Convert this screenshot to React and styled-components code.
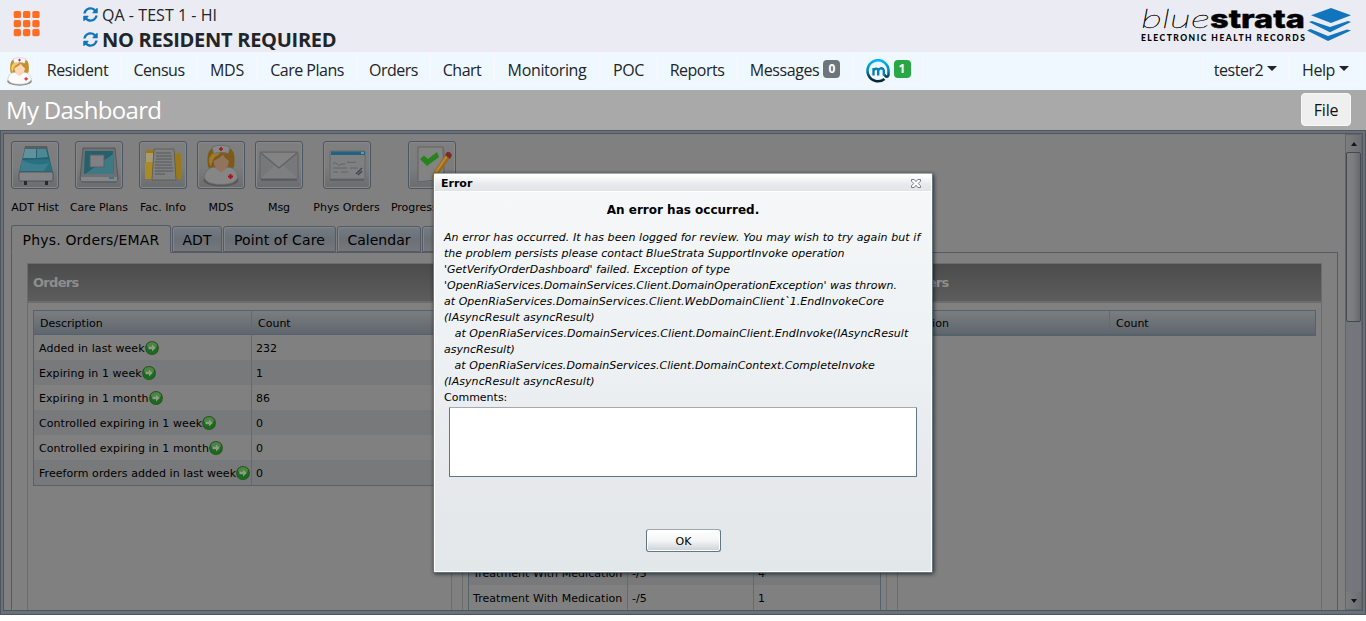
import React from "react";
import styled, { createGlobalStyle } from "styled-components";
import { FaSyncAlt } from "react-icons/fa";

const Global = createGlobalStyle`
  * { box-sizing: border-box; }
  html, body { margin: 0; background: #fff; overflow: hidden; }
`;

const ui = `"Open Sans", "Noto Sans", sans-serif`;
const vd = `"DejaVu Sans", sans-serif`;

const Page = styled.div`
  width: 1366px; height: 621px; display: flex; flex-direction: column;
  font-family: ${ui}; font-size: 16px; color: #212529; overflow: hidden;
`;
const T = styled.span`
  white-space: pre; letter-spacing: ${(p) => p.$ls || 0}px;
`;

const TopBar = styled.header`
  height: 52px; background: #ebebf3; display: flex; padding-left: 13px;
`;
const GridIcon = styled.svg`margin-top: 10px; width: 28px; height: 28px;`;
const Facility = styled.div`
  margin-left: 42px; flex: 1; display: flex; flex-direction: column; padding-top: 2px;
`;
const FacilityLine = styled.div`
  display: flex; align-items: center; gap: 4px; height: ${(p) => p.$h}px;
  font-size: ${(p) => p.$size}px; font-weight: ${(p) => (p.$bold ? 700 : 400)};
  svg { color: #0f75bc; width: 15px; height: 15px; flex: none; }
`;
const Logo = styled.svg`width: 226px; height: 52px;`;

const Nav = styled.nav`
  height: 38px; background: #f0f8ff; display: flex; align-items: flex-start; padding: 1px 4px 0 5px;
`;
const Nurse = styled.svg`width: 25px; height: 29px; margin: 4px 2px 0;`;
const NavItem = styled.div`
  width: ${(p) => p.$w}px; height: 32px; flex: none; border: 1px solid #f5f9fd; border-radius: 4px;
  display: flex; justify-content: center; align-items: center; gap: 4px; padding-top: 1px;
`;
const NavSpace = styled.div`flex: 1;`;
const Badge = styled.span`
  width: 17px; height: 18px; border-radius: 4px; background: ${(p) => p.$bg}; color: #fff; margin-bottom: 1px;
  font-size: 12px; font-weight: 700; line-height: 18px; text-align: center;
`;
const Caret = styled.span`
  border: 5px solid transparent; border-top-color: #212529; border-bottom: 0; margin-bottom: 2px;
`;
const MLogo = styled.svg`width: 24px; height: 24px; margin-top: 2px; flex: none;`;
const TitleBar = styled.div`
  height: 40px; background: #a9a9a9; display: flex; align-items: center; justify-content: space-between;
  padding: 0 15px 1px 6px; color: #fff; font-size: 24px;
`;
const FileButton = styled.button`
  width: 50px; height: 33px; border: 1px solid #f8f8f8; border-radius: 4px; background: #efefef;
  font: 16px ${ui}; color: #111; padding: 1px 0 0; letter-spacing: -0.2px;
`;

const Frame = styled.main`
  height: 485px; border: 1px solid #50555e; background: #687079; padding: 2px 2px 3px 2px; display: flex;
  font-family: ${vd}; font-size: 11px; color: #000;
`;
const Inner = styled.div`
  flex: 1; border: 1px solid #50555e; background: #808080; display: flex; overflow: hidden;
`;
const Content = styled.div`
  width: 1334px; padding: 7px 0 0 7px; display: flex; flex-direction: column; flex: none; overflow: hidden;
`;
const Tools = styled.div`display: flex; gap: 10px; height: 84px; flex: none;`;
const Tool = styled.div`
  width: ${(p) => p.$w}px; flex: none; display: flex; flex-direction: column; align-items: center;
`;
const ToolButton = styled.div`
  width: 48px; height: 48px; border: 1px solid #4a5661; border-radius: 3px;
  box-shadow: inset 0 0 0 1px #888;
  background: linear-gradient(#7f7f7f, #7b7c7d 55%, #6b6c6e);
  svg { display: block; width: 46px; height: 46px; }
`;
const ToolLabel = styled.div`height: 14px; line-height: 14px; margin-top: 12px; display: flex; justify-content: center;`;

const Tabs = styled.div`display: flex; height: 27px; align-items: flex-end; font-size: 14px; flex: none;`;
const Tab = styled.div`
  width: ${(p) => p.$w}px; height: ${(p) => (p.$on ? 28 : 26)}px; margin-bottom: ${(p) => (p.$on ? -1 : 0)}px;
  margin-right: 1px; position: relative;
  border: 1px solid #545b66; border-bottom-color: ${(p) => (p.$on ? "#808080" : "#545b66")};
  border-radius: 3px 3px 0 0; padding-top: ${(p) => (p.$on ? 2 : 1)}px;
  background: ${(p) => (p.$on ? "#808080" : "linear-gradient(#757b82, #6b7178 50%, #757779)")};
  box-shadow: ${(p) => (p.$on ? "none" : "inset 1px 1px 0 #838689")};
  display: flex; align-items: center; justify-content: center;
`;
const TabBody = styled.section`
  width: 1327px; flex: 1; border: 1px solid #545b66; border-bottom: 0; padding: 10px 15px 0;
  display: flex; gap: 10px; overflow: hidden;
`;
const Group = styled.div`
  width: 425px; flex: none; height: 400px; border: 1px solid #6a6c6f;
`;
const GroupHead = styled.h2`
  margin: 0; height: 39px; padding: 0 5px; display: flex; align-items: center;
  background: linear-gradient(#4b4b4b, #5d5d5d); border-bottom: 2px solid #6c6c6c;
  font-size: 13px; font-weight: 700; color: #8e8e8e;
`;
const Table = styled.div`
  width: 413px; margin: 7px 0 0 5px; border: 1px solid #55616b;
`;
const Row = styled.div`
  display: flex; height: ${(p) => (p.$head ? 24 : 25)}px;
  background: ${(p) => (p.$head ? "linear-gradient(#7b7e80, #5f666d)" : p.$alt ? "#77797b" : "#808080")};
  border-bottom: ${(p) => (p.$head ? "1px solid #55616b" : "0")};
`;
const Cell = styled.div`
  width: ${(p) => p.$w}px; flex: none; display: flex; align-items: center; padding: 2px 0 0 ${(p) => p.$pad}px;
  border-right: ${(p) => (p.$last ? 0 : 1)}px solid #646a70;
`;
const Arrow = styled.svg`width: 14px; height: 14px; flex: none; margin-bottom: 1px;`;

const Scroll = styled.div`
  margin-left: auto; width: 17px; border: 1px solid #5f666d; background: #73777b;
  display: flex; flex-direction: column; align-items: center;
`;
const ScrollEnd = styled.div`
  height: 17px; width: 15px; display: flex; align-items: center; justify-content: center;
  background: linear-gradient(90deg, #7c7d7f, #6c6f72); margin-top: ${(p) => (p.$end ? "auto" : 0)};
`;
const Tri = styled.i`
  border: 3.5px solid transparent; border-${(p) => (p.$up ? "bottom" : "top")}: 4px solid #151515;
  border-${(p) => (p.$up ? "top" : "bottom")}: 0;
`;
const Thumb = styled.div`
  width: 15px; height: 170px; border: 1px solid #42494f; border-radius: 2px;
  background: linear-gradient(90deg, #808080, #7c7d7e 45%, #66696c);
`;

const Dialog = styled.div`
  position: absolute; z-index: 5; left: 433px; top: 173px; width: 500px; height: 400px;
  border: 1px solid #617786; border-top-color: #a1acb5; border-radius: 2px;
  box-shadow: inset 0 0 0 1px #fff, 1px 1px 4px rgba(0,0,0,.65);
  padding: 1px; background: linear-gradient(#f6f8f9, #ecf0f2 50%, #e7e9ed 75%, #e2e7e9);
  font: 11px ${vd}; color: #000; display: flex; flex-direction: column;
`;
const DialogTitle = styled.div`
  height: 17px; flex: none; background: linear-gradient(#fff, #e8ebed 55%, #e1e5e7); border-bottom: 1px solid #fff;
  display: flex; justify-content: space-between; align-items: center; padding: 0 10px 0 6px; font-weight: 700;
`;
const DialogHeading = styled.div`
  height: 38px; line-height: 37px; text-align: center; font-size: 12px; font-weight: 700; flex: none;
`;
const Message = styled.div`
  padding-left: 9px; display: flex; flex-direction: column; line-height: 16px; font-style: italic; height: 160px; flex: none;
`;
const CommentLabel = styled.label`height: 17px; line-height: 16px; padding-left: 9px; flex: none;`;
const Comment = styled.textarea`
  width: 468px; height: 70px; margin: 0 0 0 14px; resize: none; background: #fff; display: block;
  border: 1px solid #5e7688; border-top-color: #a2abb2; border-radius: 1px; outline: 0; flex: none;
`;
const OkButton = styled.button`
  width: 75px; height: 23px; margin: 52px auto 0 211px; border: 1px solid #617786; border-top-color: #9ba6ae; border-radius: 3px;
  box-shadow: inset 0 0 0 1px #fff; background: linear-gradient(#fff, #f4f5f6 50%, #ccd1d5); font: 11px ${vd}; color: #000; padding: 1px 0 0;
`;

const NurseArt = ({ k }) => (
  <g>
    <path d="M10 25 Q8 11 13 7 Q23 3 33 7 Q38 11 36 25 L31 29 H15Z" fill={k ? "#c58f2c" : "#7e5a18"} />
    <path d="M11 20 Q11 10 21 9 Q25 11 17 15 Q14 18 13 25Z" fill={k ? "#f0cc6a" : "#9c7a30"} />
    <ellipse cx="23" cy="38" rx="17.500" ry="6.500" fill={k ? "#8d8d90" : "#58585a"} />
    <path d="M6 35 Q8 25 17 25 Q23 31 29 25 Q38 25 40 35 Q38 42.500 23 42.500 Q8 42.500 6 35Z" fill={k ? "#fbfbfc" : "#868686"} stroke={k ? "#b9b9bd" : "#6a6a6b"} strokeWidth=".8" />
    <path d="M15.500 19 Q21 17 25 12.500 Q27 17 31 19 Q30 27 23 30.500 Q16.500 27 15.500 19Z" fill={k ? "#fbd6b8" : "#93735e"} />
    <path d="M14 5 Q23 1.500 32 5 L30.500 11.500 Q23 9 15.500 11.500Z" fill={k ? "#fafafb" : "#898989"} stroke={k ? "#c2c2c6" : "#67686a"} strokeWidth=".8" />
    <path d="M23 5v4M21 7h4" stroke={k ? "#e0202a" : "#9c1a20"} strokeWidth="1.500" />
    <path d="M32.500 32v5M30 34.500h5" stroke={k ? "#e0202a" : "#a81119"} strokeWidth="1.900" />
  </g>
);

const art = {
  bed: (
    <g>
      <path d="M13 5h22l6 26H7z" fill="#23636f" />
      <path d="M13 4h22l.6 3H12.500z" fill="#565d63" />
      <path d="M13 7h11v9H11z" fill="#5f929d" /><path d="M25 7h9l2 8-11 1z" fill="#4b8996" />
      <path d="M10 18l27-1 4 13H7z" fill="#2b7080" /><path d="M10 18q12 7 27 3l-5 8H8z" fill="#4a8b98" opacity=".55" />
      <rect x="7" y="30" width="34" height="9" rx="1" fill="#848586" stroke="#484a4c" strokeWidth=".8" />
      <path d="M12 39v4h3v-4M33 39v4h3v-4" fill="#292929" />
    </g>
  ),
  frame: (
    <g>
      <path d="M7 6h32l3 31-2 3H6l-2-3z" fill="#6c7175" stroke="#4d5256" strokeWidth=".8" />
      <path d="M9 9h28l1 23H8z" fill="#23616c" />
      <path d="M9 32 37 12l1 20z" fill="#3f7984" />
      <rect x="14" y="13" width="14" height="12" fill="#808186" stroke="#5d6163" />
      <path d="M5 35h36v4H5z" fill="#858688" /><path d="M33 36h5" stroke="#2b7182" strokeWidth="1.500" />
    </g>
  ),
  folder: (
    <g>
      <path d="M5 11q0-3 3-3h7v3h23q3 0 3 3v23H5z" fill="#99791a" />
      <path d="M5 20h8v17H5z" fill="#a98a25" /><path d="M6 11h7v9H6z" fill="#a79b71" />
      <path d="M14 7h20l2 31H12z" fill="#7f8081" stroke="#55534c" strokeWidth=".7" />
      <path d="M16 11h15M16 14h16M16 17h16M15 20h17M15 23h17M15 26h18M15 29h18M15 32h10" stroke="#535353" strokeWidth=".9" />
    </g>
  ),
  nurse: <NurseArt />,
  mail: (
    <g>
      <rect x="4" y="10" width="38" height="27" rx="1" fill="#777879" stroke="#626365" />
      <path d="M5 36 19 23h8l14 13z" fill="#7e7f80" /><path d="M5 11l18 15 18-15" fill="#838384" stroke="#606163" strokeWidth="1.200" />
      <path d="M5 38h36" stroke="#4c4d4e" />
    </g>
  ),
  form: (
    <g>
      <rect x="6" y="9" width="35" height="28" rx="1" fill="#7f8081" stroke="#666a6d" />
      <path d="M7 9.500h34v3.500H7z" fill="#23637f" /><path d="M37 10h3v2h-3z" fill="#6c95a6" />
      <path d="M9 22q3-3 4 0t4 0h4m2-2q4 1 9 0M9 26h14m3 0h8M9 30h5m3 0h7" stroke="#606163" fill="none" strokeWidth=".9" />
      <path d="M32 32l6-6M34 33l4-4" stroke="#454648" strokeWidth="1.500" /><path d="M6 38h34" stroke="#505152" />
    </g>
  ),
  check: (
    <g>
      <path d="M10 7h26v33H9z" fill="#747576" /><path d="M9 5h25l1 32-26 3z" fill="#838384" stroke="#5b5c5d" strokeWidth=".8" />
      <path d="M11 17l4-3.500 4 3.500 9-7 2 5-12 9z" fill="#28831d" />
      <path d="M24 31 36 13l5 3-12 17-6 3z" fill="#9b691a" /><path d="M27 30 38 14" stroke="#b98a3d" strokeWidth="2" />
      <path d="M36 13l2-3q3-1 5 3l-2 4z" fill="#7d2a2e" />
    </g>
  ),
};

const tools = [
  ["ADT Hist", 48, "bed"], ["Care Plans", 60, "frame"], ["Fac. Info", 48, "folder"], ["MDS", 48, "nurse"],
  ["Msg", 48, "mail"], ["Phys Orders", 67, "form"], ["Progress Notes", 84, "check"],
];
const menus = [
  ["Resident", 87, -0.42], ["Census", 76, -0.45], ["MDS", 60, -0.2], ["Care Plans", 100, -0.5], ["Orders", 73, -0.5],
  ["Chart", 64, -0.5], ["Monitoring", 106, -0.35], ["POC", 57, -0.3], ["Reports", 80, -0.5],
];
const orders = [
  ["Added in last week", "232"], ["Expiring in 1 week", "1"], ["Expiring in 1 month", "86"],
  ["Controlled expiring in 1 week", "0"], ["Controlled expiring in 1 month", "0"], ["Freeform orders added in last week", "0"],
];
const treatments = [...Array(9).fill(["", "", ""]), ["Treatment With Medication", "-/5", "4"], ["Treatment With Medication", "-/5", "1"]];
const message = [
  ["An error has occurred. It has been logged for review. You may wish to try again but if", 0.085],
  ["the problem persists please contact BlueStrata SupportInvoke operation", 0.02],
  ["'GetVerifyOrderDashboard' failed. Exception of type", 0],
  ["'OpenRiaServices.DomainServices.Client.DomainOperationException' was thrown.", 0],
  ["at OpenRiaServices.DomainServices.Client.WebDomainClient`1.EndInvokeCore", 0.035],
  ["(IAsyncResult asyncResult)", 0.06],
  ["   at OpenRiaServices.DomainServices.Client.DomainClient.EndInvoke(IAsyncResult", 0.055],
  ["asyncResult)", 0],
  ["   at OpenRiaServices.DomainServices.Client.DomainContext.CompleteInvoke", 0.03],
  ["(IAsyncResult asyncResult)", 0.06],
];

const GreenArrow = () => (
  <Arrow viewBox="0 0 14 14">
    <circle cx="7" cy="7" r="6.900" fill="#25521f" /><circle cx="7" cy="7.500" r="6" fill="#1c6a1d" />
    <ellipse cx="7" cy="4.300" rx="5" ry="3.300" fill="#5f9056" opacity=".7" />
    <path d="M3.500 5.800h3.500V3.600L10.800 7 7 10.400V8.200H3.500z" fill="#8d9b88" />
  </Arrow>
);

export default function App() {
  return (
    <Page>
      <Global />
      <TopBar>
        <GridIcon viewBox="0 0 28 28" fill="#ff6d22">
          {[0, 1, 2].map((r) => [0, 1, 2].map((c) => (
            <rect key={`${r}${c}`} x={0.7 + c * 9.3} y={0.9 + r * 9.1} width="7.300" height="7.200" rx="1.700" />
          )))}
        </GridIcon>
        <Facility>
          <FacilityLine $h={25} $size={16}><FaSyncAlt /><T $ls={0.05}>QA - TEST 1 - HI</T></FacilityLine>
          <FacilityLine $h={25} $size={20} $bold><FaSyncAlt /><T $ls={-0.27}>NO RESIDENT REQUIRED</T></FacilityLine>
        </Facility>
        <Logo viewBox="0 0 226 52">
          <text x="1" y="28" fontFamily="Lato" fontWeight="200" fontStyle="italic" fontSize="26" textLength="69" lengthAdjust="spacingAndGlyphs" stroke="#000" strokeWidth=".3">blue</text>
          <text x="70" y="28" fontFamily="Inter" fontWeight="800" fontSize="25" textLength="95" lengthAdjust="spacingAndGlyphs" stroke="#000" strokeWidth=".4">strata</text>
          <text x="1" y="41" fontFamily="Lato" fontWeight="900" fontSize="8.500" textLength="165" letterSpacing="1.100">ELECTRONIC HEALTH RECORDS</text>
          <g fill="#1075bd">
            <path d="M191 8 211 15.300 191 23 171 15.300z" />
            <path d="M169 22 172 21 190 27 208 21 211 22 190 32.300z" />
            <path d="M167 30.500 170.500 29 188 36 207 29.500 211 30.500 188 41z" />
          </g>
        </Logo>
      </TopBar>
      <Nav>
        <Nurse viewBox="5 2.500 36 42.500" preserveAspectRatio="none"><NurseArt k /></Nurse>
        {menus.map(([m, w, ls]) => <NavItem key={m} $w={w}><T $ls={ls}>{m}</T></NavItem>)}
        <NavItem $w={116}><T $ls={-0.4}>Messages</T><Badge $bg="#6c757d">0</Badge></NavItem>
        <NavItem $w={70}>
          <MLogo viewBox="0 0 24 24">
            <defs><linearGradient id="m" x1="0" y1="0" x2="0" y2="1"><stop offset="0" stopColor="#00b4ff" /><stop offset=".45" stopColor="#078dc4" /><stop offset=".8" stopColor="#0b3a50" /><stop offset="1" stopColor="#082533" /></linearGradient></defs>
            <path d="M18.500 20A10.500 10.500 0 1 1 22.500 12v4q-.5 2-2.500 1.500-1.600-.5-1.600-2.500" fill="none" stroke="url(#m)" strokeWidth="2.600" />
            <path d="M7.500 16.500V9m0 2.500q2-3 4.700-1v6M12.500 11q2-2.800 4.500-1 .8.600.8 2v4.500" fill="none" stroke="#087fb0" strokeWidth="2.400" />
          </MLogo>
          <Badge $bg="#28a745">1</Badge>
        </NavItem>
        <NavSpace />
        <NavItem $w={87}><T $ls={-0.45}>tester2</T><Caret /></NavItem>
        <NavItem $w={73}><T $ls={-0.4}>Help</T><Caret /></NavItem>
      </Nav>
      <TitleBar><T $ls={-0.7}>My Dashboard</T><FileButton>File</FileButton></TitleBar>
      <Frame>
        <Inner>
          <Content>
            <Tools>
              {tools.map(([t, w, a]) => (
                <Tool key={t} $w={w}>
                  <ToolButton><svg viewBox="0 0 46 46">{art[a]}</svg></ToolButton>
                  <ToolLabel><T>{t}</T></ToolLabel>
                </Tool>
              ))}
            </Tools>
            <Tabs>
              <Tab $w={160} $on><T $ls={0.18}>Phys. Orders/EMAR</T></Tab>
              <Tab $w={50}><T>ADT</T></Tab>
              <Tab $w={113}><T $ls={0.1}>Point of Care</T></Tab>
              <Tab $w={84}><T>Calendar</T></Tab>
              <Tab $w={90} />
            </Tabs>
            <TabBody>
              <Group>
                <GroupHead><T $ls={-0.7}>Orders</T></GroupHead>
                <Table>
                  <Row $head><Cell $w={218} $pad={6}><T>Description</T></Cell><Cell $w={193} $pad={6} $last><T>Count</T></Cell></Row>
                  {orders.map(([d, c], i) => (
                    <Row key={d} $alt={i % 2}><Cell $w={218} $pad={5}><T $ls={0.07}>{d}</T><GreenArrow /></Cell><Cell $w={193} $pad={4} $last>{c}</Cell></Row>
                  ))}
                </Table>
              </Group>
              <Group>
                <GroupHead />
                <Table>
                  <Row $head />
                  {treatments.map(([d, a, b], i) => (
                    <Row key={i} $alt={i % 2}><Cell $w={159} $pad={4}><T $ls={0.05}>{d}</T></Cell><Cell $w={126} $pad={4}><T>{a}</T></Cell><Cell $w={126} $pad={4} $last>{b}</Cell></Row>
                  ))}
                </Table>
              </Group>
              <Group>
                <GroupHead><T $ls={-0.7}>Orders</T></GroupHead>
                <Table>
                  <Row $head><Cell $w={206} $pad={10}><T $ls={0.1}>Action</T></Cell><Cell $w={205} $pad={6} $last><T>Count</T></Cell></Row>
                </Table>
              </Group>
            </TabBody>
          </Content>
          <Scroll>
            <ScrollEnd><Tri $up /></ScrollEnd>
            <Thumb />
            <ScrollEnd $end><Tri /></ScrollEnd>
          </Scroll>
        </Inner>
      </Frame>
      <Dialog>
        <DialogTitle>
          <T>Error</T>
          <svg width="10" height="9" viewBox="0 0 10 9">
            <path d="M.5.500h2.700L5 2.700 6.800.500h2.700v1.700L7.200 4.500l2.300 2.300v1.700H6.800L5 6.300 3.200 8.500H.500V6.800l2.300-2.300L.500 2.200z" fill="#fff" stroke="#6d7073" strokeWidth=".9" />
          </svg>
        </DialogTitle>
        <DialogHeading><T>An error has occurred.</T></DialogHeading>
        <Message>{message.map(([t, ls], i) => <T key={i} $ls={ls}>{t}</T>)}</Message>
        <CommentLabel><T>Comments:</T></CommentLabel>
        <Comment />
        <OkButton>OK</OkButton>
      </Dialog>
    </Page>
  );
}
